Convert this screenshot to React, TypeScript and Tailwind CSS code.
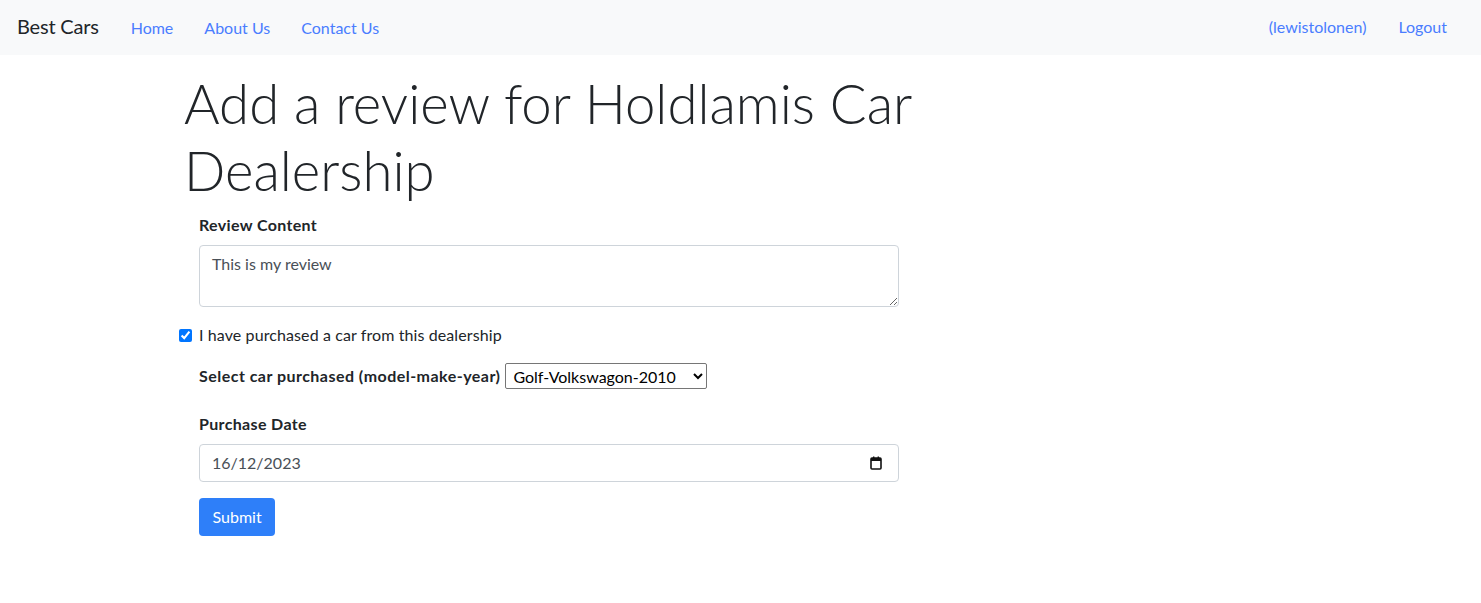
import { useState } from 'react';

const font = { fontFamily: '"Segoe UI", Lato, "Noto Sans", sans-serif' };

function CalendarIcon() {
  return (
    <svg width="12" height="14" viewBox="0 0 12 14" fill="none">
      <rect x="1" y="2" width="10" height="11" rx="1" stroke="#111" strokeWidth="1.6" />
      <rect x="1" y="2" width="10" height="3" fill="#111" />
      <rect x="3" y="0.5" width="1.4" height="2.5" fill="#111" />
      <rect x="7.6" y="0.5" width="1.4" height="2.5" fill="#111" />
    </svg>
  );
}

export default function App() {
  const [review, setReview] = useState('This is my review');
  const [purchased, setPurchased] = useState(true);
  const [car, setCar] = useState('Golf-Volkswagon-2010');

  return (
    <div className="min-h-screen bg-white text-[#212529]" style={font}>
      <nav className="flex h-[55px] items-center justify-between bg-[#f8f9fa] pl-[17px] pr-[34px]">
        <div className="flex items-center">
          <a className="text-[20px] leading-[30px] tracking-[-0.2px] text-[#212529] -mt-[4px]">Best Cars</a>
          <div className="ml-[32px] flex gap-[31px] text-[16px] leading-6 text-[#4a7dff]">
            <a>Home</a>
            <a>About Us</a>
            <a>Contact Us</a>
          </div>
        </div>
        <div className="flex gap-[32px] text-[16px] leading-6 text-[#4a7dff] -mt-[2px]">
          <a>(lewistolonen)</a>
          <a>Logout</a>
        </div>
      </nav>

      <main className="pl-[179px] pt-[15px]">
        <h1 className="ml-[5px] w-[760px] text-[54.5px] font-light leading-[67px]">
          Add a review for Holdlamis Car Dealership
        </h1>

        <form className="mt-[9px] w-[720px]" onSubmit={(e) => e.preventDefault()}>
          <div className="pl-[20px]">
            <label className="block text-[16px] font-bold leading-6 tracking-[0.35px]">Review Content</label>
            <textarea
              value={review}
              onChange={(e) => setReview(e.target.value)}
              className="mt-[8px] block h-[62px] w-[700px] rounded-[4px] border border-[#ced4da] px-3 py-[6px] text-[16px] leading-6 text-[#495057] outline-none"
            />
          </div>

          <div className="mt-[16px] flex h-6 items-center">
            <input
              type="checkbox"
              checked={purchased}
              onChange={(e) => setPurchased(e.target.checked)}
              className="m-0 h-[13px] w-[13px] accent-[#0075ff]"
            />
            <span className="ml-[7px] text-[16px] leading-6 tracking-[0.1px]">I have purchased a car from this dealership</span>
          </div>

          <div className="mt-[16px] flex items-center pl-[20px]">
            <label className="text-[16px] font-bold leading-6 tracking-[0.47px]">Select car purchased (model-make-year)</label>
            <select
              value={car}
              onChange={(e) => setCar(e.target.value)}
              className="ml-[5px] h-[26px] w-[202px] rounded-[2px] border border-[#767676] bg-white pl-[3px] text-[16px] text-black"
            >
              <option>Golf-Volkswagon-2010</option>
              <option>Passat-Volkswagon-2015</option>
              <option>Civic-Honda-2018</option>
            </select>
          </div>

          <div className="mt-[23px] pl-[20px]">
            <label className="block text-[16px] font-bold leading-6 tracking-[0.35px]">Purchase Date</label>
            <div className="mt-[8px] flex h-[38px] w-[700px] items-center justify-between rounded-[4px] border border-[#ced4da] pl-3 pr-[16px] text-[16px] text-[#495057]">
              <span>16/12/2023</span>
              <CalendarIcon />
            </div>
            <button
              type="submit"
              className="mt-[16px] h-[38px] rounded-[4px] bg-[#2e7ff9] px-[13.5px] text-[16px] text-white"
            >
              Submit
            </button>
          </div>
        </form>
      </main>
    </div>
  );
}
